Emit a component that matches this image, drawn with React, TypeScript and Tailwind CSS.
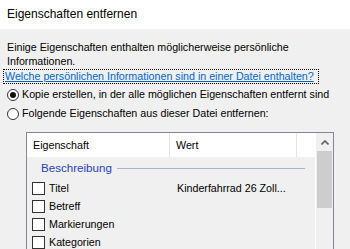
import React from 'react'

const rows = [
  { name: 'Titel', value: 'Kinderfahrrad 26 Zoll...' },
  { name: 'Betreff', value: '' },
  { name: 'Markierungen', value: '' },
  { name: 'Kategorien', value: '' },
]

function Radio({ checked }: { checked?: boolean }) {
  return (
    <span className="w-[12px] h-[12px] rounded-full border border-[#333] bg-white flex items-center justify-center flex-shrink-0">
      {checked && <span className="w-[6px] h-[6px] rounded-full bg-[#111]" />}
    </span>
  )
}

export default function App() {
  return (
    <div className="w-[350px] h-[249px] overflow-hidden bg-[#f0f0f0] text-[10.7px] text-black font-['Liberation_Sans',sans-serif] leading-none whitespace-nowrap">
      {/* Title */}
      <div className="h-[29px] bg-white flex items-center pl-[7px] pb-[1px] text-[12px]">Eigenschaften entfernen</div>

      {/* Body */}
      <div className="pl-[7px] pt-[11px]">
        <p className="leading-[14px]">
          Einige Eigenschaften enthalten möglicherweise persönliche
          <br />
          Informationen.
        </p>
        <div className="-ml-[4px] mt-[1px] h-[15px] w-[316px] border border-dotted border-black flex items-center pl-[1px]">
          <span className="text-[#0066cc] underline">Welche persönlichen Informationen sind in einer Datei enthalten?</span>
        </div>
        <div className="h-[19px] flex items-center gap-[3px] mt-[1px]">
          <Radio checked />
          <span>Kopie erstellen, in der alle möglichen Eigenschaften entfernt sind</span>
        </div>
        <div className="h-[19px] flex items-center gap-[3px]">
          <Radio />
          <span>Folgende Eigenschaften aus dieser Datei entfernen:</span>
        </div>
      </div>

      {/* List */}
      <div className="ml-[26px] mt-[9px] w-[308px] h-[140px] border border-[#828790] flex">
        <div className="flex-1 flex flex-col border-r border-white">
          <div className="h-[24px] bg-white flex">
            <div className="w-[143px] border-r border-[#e5e5e5] flex items-center pl-[6px]">Eigenschaft</div>
            <div className="w-[127px] border-r border-[#e5e5e5] flex items-center pl-[6px]">Wert</div>
          </div>
          <div className="h-[22px] flex items-center pl-[14px] pr-[10px] gap-[5px]">
            <span className="text-[#1f3fbf] text-[11.6px]">Beschreibung</span>
            <span className="flex-1 h-px bg-[#a5b4d8]" />
          </div>
          {rows.map(r => (
            <div key={r.name} className="h-[18px] flex items-center">
              <div className="w-[144px] flex items-center pl-[5px] gap-[4px]">
                <span className="w-[13px] h-[13px] border border-[#333] bg-white flex-shrink-0" />
                <span>{r.name}</span>
              </div>
              <span className="pl-[6px]">{r.value}</span>
            </div>
          ))}
        </div>
        {/* Scrollbar */}
        <div className="w-[17px] flex flex-col">
          <div className="h-[18px] flex items-center justify-center">
            <svg width="8" height="5" viewBox="0 0 8 5">
              <path d="M0.5 4.5 L4 1 L7.5 4.5" stroke="#606060" strokeWidth="1.6" fill="none" />
            </svg>
          </div>
          <div className="mx-[1px] h-[57px] bg-[#cdcdcd]" />
        </div>
      </div>
    </div>
  )
}
